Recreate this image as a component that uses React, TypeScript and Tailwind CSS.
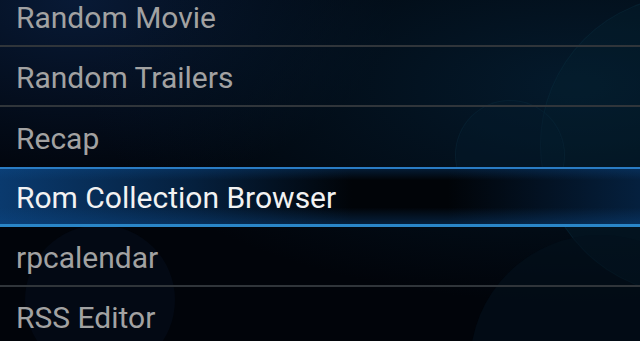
const items = [
  "Random Movie",
  "Random Trailers",
  "Recap",
  "Rom Collection Browser",
  "rpcalendar",
  "RSS Editor",
];

const selected = 3;

const App = () => {
  return (
    <div
      className="relative w-[640px] h-[341px] overflow-hidden bg-[#01040a]"
      style={{ fontFamily: "Roboto, 'Noto Sans', sans-serif" }}
    >
      {/* Background glow + bokeh */}
      <div className="absolute inset-0 bg-[radial-gradient(ellipse_at_12%_0%,#081a36_0%,transparent_40%)]" />
      <div className="absolute inset-0 bg-[radial-gradient(ellipse_at_90%_25%,#041a2c_0%,transparent_60%)]" />
      <div className="absolute left-[540px] top-[-5px] w-[300px] h-[300px] rounded-full bg-[#06202f]/40 border border-[#0b2c3e]/40" />
      <div className="absolute left-[455px] top-[100px] w-[110px] h-[110px] rounded-full bg-[#061c2c]/40 border border-[#0b2a3c]/40" />
      <div className="absolute left-[470px] top-[235px] w-[260px] h-[260px] rounded-full bg-[#03111c]/60" />
      <div className="absolute left-[25px] top-[225px] w-[150px] h-[150px] rounded-full bg-[#040b18]/70" />

      {/* List */}
      <div className="relative flex flex-col mt-[-13px]">
        {items.map((label, i) => {
          if (i === selected) {
            return (
              <div
                key={label}
                className="relative h-[60px] flex items-center px-4 pt-[2px] border-t-2 border-b-[3px] border-t-[#2a7cc4] border-b-[#2a86c8] bg-[linear-gradient(90deg,#0a3a6e_0%,#05203e_30%,#010408_55%,#010408_70%,#05203e_100%)]"
              >
                <div className="absolute inset-0 bg-[linear-gradient(180deg,#0c4a8a55_0%,transparent_20%,transparent_70%,#0c4a8a66_100%)]" />
                <span className="relative text-[30px] text-[#f2f2f2] leading-none">{label}</span>
              </div>
            );
          }
          const hideLine = i === selected - 1;
          return (
            <div
              key={label}
              className={
                hideLine
                  ? "h-[60px] flex items-center px-4 pt-[3px]"
                  : "h-[60px] flex items-center px-4 pt-[3px] border-b-2 border-[#30353a]"
              }
            >
              <span className="text-[30px] text-[#a2a2a2] leading-none">{label}</span>
            </div>
          );
        })}
      </div>
    </div>
  );
};

export default App;
